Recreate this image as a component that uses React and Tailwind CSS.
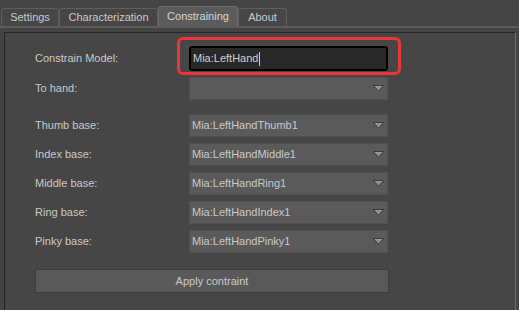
import React from "react";

const tabs = [
  { name: "Settings", w: "w-[58px]" },
  { name: "Characterization", w: "w-[99px]" },
  { name: "Constraining", w: "w-[80px]", active: true },
  { name: "About", w: "w-[49px]" },
];

const bases = [
  ["Thumb base:", "Mia:LeftHandThumb1"],
  ["Index base:", "Mia:LeftHandMiddle1"],
  ["Middle base:", "Mia:LeftHandRing1"],
  ["Ring base:", "Mia:LeftHandIndex1"],
  ["Pinky base:", "Mia:LeftHandPinky1"],
];

const Arrow = () => (
  <svg width="11" height="7" viewBox="0 0 11 7" className="mr-[2px]">
    <polygon points="0.5,0.5 10.5,0.5 5.5,6" fill="#a8a8a8" stroke="#3a3a3a" strokeWidth="1" />
    <polygon points="2.5,1.5 8.5,1.5 5.5,4.5" fill="#8c8c8c" />
  </svg>
);

const Dropdown = ({ value, mt }) => (
  <div className={`flex items-center justify-between w-[199px] h-[23px] pl-[2px] pr-[1px] bg-[#5a5a5a] border border-[#505050] ${mt}`}>
    <span className="text-[#c9c9c9]">{value}</span>
    <Arrow />
  </div>
);

const Row = ({ label, children, mt = "" }) => (
  <div className={`flex items-center ${mt}`}>
    <div className="w-[154px] text-[#c9c9c9]">{label}</div>
    {children}
  </div>
);

export default function App() {
  return (
    <div
      className="w-[519px] h-[310px] bg-[#444444] overflow-hidden flex flex-col text-[11px] leading-none"
      style={{ fontFamily: '"Liberation Sans", Arial, sans-serif' }}
    >
      <div className="flex items-end h-[26px] pl-[1px]">
        {tabs.map((t) =>
          t.active ? (
            <div
              key={t.name}
              className={`${t.w} h-[20px] flex items-center justify-center rounded-t-[3px] border border-b-0 border-[#6a6a6a] bg-[#5b5b5b] text-[#d4d4d4]`}
            >
              {t.name}
            </div>
          ) : (
            <div
              key={t.name}
              className={`${t.w} h-[18px] flex items-center justify-center rounded-t-[3px] border border-b-0 border-[#5e5e5e] bg-[#464646] text-[#cacaca]`}
            >
              {t.name}
            </div>
          )
        )}
      </div>
      <div className="h-[2px] bg-[#5c5c5c]" />
      <div className="flex-1 ml-[4px] mr-[3px] mt-[4px] border-t border-l border-r border-[#262626] border-r-[#6e6e6e] bg-[#464646] flex flex-col pl-[30px]">
        <Row label="Constrain Model:" mt="mt-[13px]">
          <div className="relative">
            <div className="absolute -left-[12px] -top-[9px] -right-[13px] -bottom-[4px] border-[3px] border-[#e8363b] rounded-[6px]" />
            <div className="w-[199px] h-[25px] border-2 border-black bg-[#282828] rounded-[3px] flex items-center pl-[2px] text-[#cfcfcf]">
              Mia:LeftHand
              <span className="inline-block w-px h-[14px] bg-[#d0d0d0] ml-[1px]" />
            </div>
          </div>
        </Row>
        <Row label="To hand:" mt="mt-[6px]">
          <Dropdown value="" />
        </Row>
        {bases.map(([label, value], i) => (
          <Row key={label} label={label} mt={i === 0 ? "mt-[14px]" : "mt-[6px]"}>
            <Dropdown value={value} />
          </Row>
        ))}
        <div className="mt-[16px] w-[354px] h-[24px] bg-[#595959] border border-[#3c3c3c] flex items-center justify-center text-[#c9c9c9]">
          Apply contraint
        </div>
      </div>
    </div>
  );
}
